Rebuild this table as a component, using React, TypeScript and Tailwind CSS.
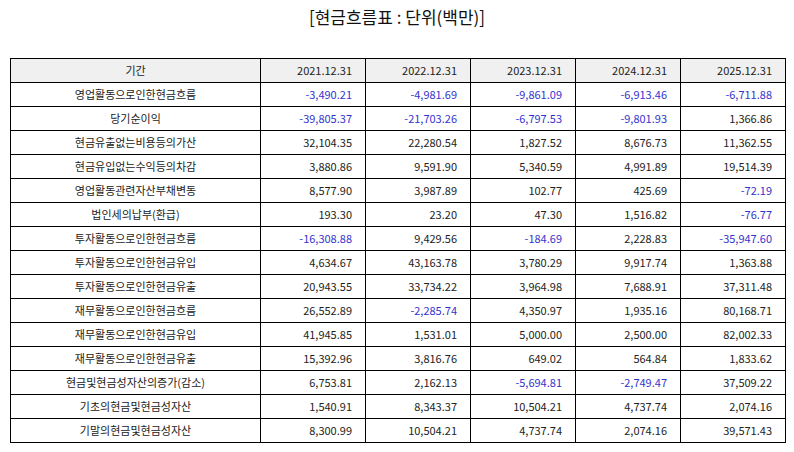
const years = ['2021.12.31', '2022.12.31', '2023.12.31', '2024.12.31', '2025.12.31']

const rows: [string, string[]][] = [
  ['영업활동으로인한현금흐름', ['-3,490.21', '-4,981.69', '-9,861.09', '-6,913.46', '-6,711.88']],
  ['당기순이익', ['-39,805.37', '-21,703.26', '-6,797.53', '-9,801.93', '1,366.86']],
  ['현금유출없는비용등의가산', ['32,104.35', '22,280.54', '1,827.52', '8,676.73', '11,362.55']],
  ['현금유입없는수익등의차감', ['3,880.86', '9,591.90', '5,340.59', '4,991.89', '19,514.39']],
  ['영업활동관련자산부채변동', ['8,577.90', '3,987.89', '102.77', '425.69', '-72.19']],
  ['법인세의납부(환급)', ['193.30', '23.20', '47.30', '1,516.82', '-76.77']],
  ['투자활동으로인한현금흐름', ['-16,308.88', '9,429.56', '-184.69', '2,228.83', '-35,947.60']],
  ['투자활동으로인한현금유입', ['4,634.67', '43,163.78', '3,780.29', '9,917.74', '1,363.88']],
  ['투자활동으로인한현금유출', ['20,943.55', '33,734.22', '3,964.98', '7,688.91', '37,311.48']],
  ['재무활동으로인한현금흐름', ['26,552.89', '-2,285.74', '4,350.97', '1,935.16', '80,168.71']],
  ['재무활동으로인한현금유입', ['41,945.85', '1,531.01', '5,000.00', '2,500.00', '82,002.33']],
  ['재무활동으로인한현금유출', ['15,392.96', '3,816.76', '649.02', '564.84', '1,833.62']],
  ['현금및현금성자산의증가(감소)', ['6,753.81', '2,162.13', '-5,694.81', '-2,749.47', '37,509.22']],
  ['기초의현금및현금성자산', ['1,540.91', '8,343.37', '10,504.21', '4,737.74', '2,074.16']],
  ['기말의현금및현금성자산', ['8,300.99', '10,504.21', '4,737.74', '2,074.16', '39,571.43']],
]

export default function App() {
  return (
    <div
      className="w-[794px] h-[452px] bg-white text-[#222]"
      style={{ fontFamily: '"Noto Sans CJK KR", "Noto Sans", sans-serif' }}
    >
      <div className="h-[36px] pt-[5px] text-center text-[17px] leading-[24px] text-[#111]">
        [현금흐름표 : 단위(백만)]
      </div>
      <div className="pl-[10px] pt-[22px]">
        <table className="border-collapse table-fixed w-[775px] text-[11px]">
          <colgroup>
            <col className="w-[250px]" />
            {years.map(y => <col key={y} className="w-[105px]" />)}
          </colgroup>
          <thead>
            <tr className="h-[24px] bg-[#f0f0f0]">
              <th className="border border-black font-normal text-center p-0">기간</th>
              {years.map(y => (
                <th key={y} className="border border-black font-normal text-right pr-[13px] p-0">{y}</th>
              ))}
            </tr>
          </thead>
          <tbody>
            {rows.map(([label, vals]) => (
              <tr key={label} className="h-[24px]">
                <td className="border border-black text-center p-0">{label}</td>
                {vals.map((v, i) => (
                  <td
                    key={i}
                    className={`border border-black text-right p-0 pr-[13px] ${v.startsWith('-') ? 'text-[#3333cc]' : ''}`}
                  >
                    {v}
                  </td>
                ))}
              </tr>
            ))}
          </tbody>
        </table>
      </div>
    </div>
  )
}
